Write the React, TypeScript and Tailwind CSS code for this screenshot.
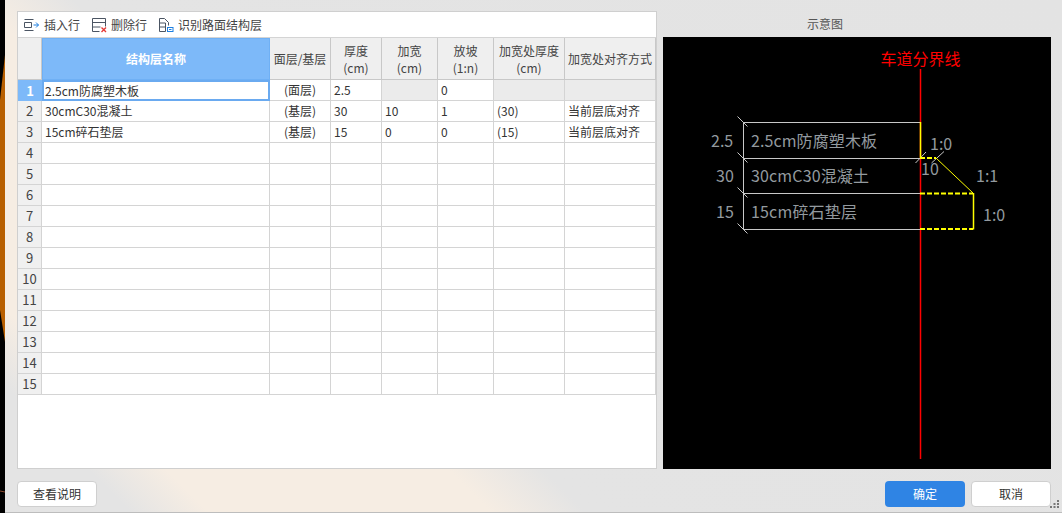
const font = { fontFamily: '"Noto Sans CJK SC", "Noto Sans", sans-serif' }

const columns = [
  { title: '结构层名称' },
  { title: '面层/基层' },
  { title: '厚度', unit: '(cm)' },
  { title: '加宽', unit: '(cm)' },
  { title: '放坡', unit: '(1:n)' },
  { title: '加宽处厚度', unit: '(cm)' },
  { title: '加宽处对齐方式' },
]

const rows = [
  ['2.5cm防腐塑木板', '(面层)', '2.5', '', '0', '', ''],
  ['30cmC30混凝土', '(基层)', '30', '10', '1', '(30)', '当前层底对齐'],
  ['15cm碎石垫层', '(基层)', '15', '0', '0', '(15)', '当前层底对齐'],
]

const InsertIcon = () => (
  <svg width="16" height="14" viewBox="0 0 16 14" fill="none" stroke="#4b5563" strokeWidth="1">
    <path d="M1.5 1.5h9M1.5 12.5h9M1.5 4.5h7v5h-7z" />
    <path d="M10.5 7h5M13 4.5L15.5 7L13 9.5" stroke="#1d7fe0" />
  </svg>
)

const DeleteIcon = () => (
  <svg width="16" height="16" viewBox="0 0 16 16" fill="none" stroke="#4b5563" strokeWidth="1">
    <path d="M1.5 14.5v-13h13v8M1.5 5.5h13M1.5 10h8M1.5 14.5h7" />
    <path d="M10.5 10.5l4.500 4.500M15 10.5l-4.500 4.500" stroke="#e53935" strokeWidth="1.4" />
  </svg>
)

const DetectIcon = () => (
  <svg width="16" height="16" viewBox="0 0 16 16" fill="none" stroke="#4b5563" strokeWidth="1">
    <path d="M1.5 14.5v-13h5l4 4v3M1.5 6h6v8.500M1.5 10h6M1.5 14.5h6" />
    <rect x="9.5" y="10.5" width="5.5" height="4" stroke="#1d7fe0" />
    <path d="M11 12.5h2.5" stroke="#1d7fe0" />
  </svg>
)

const Toolbar = () => (
  <div className="flex h-[26px] items-center gap-[11px] border-b border-[#d4d4d4] pl-[5px] text-[12px] text-[#444]">
    <span className="flex items-center gap-[5px]">
      <InsertIcon />
      插入行
    </span>
    <span className="flex items-center gap-[4px]">
      <DeleteIcon />
      删除行
    </span>
    <span className="flex items-center gap-[4px]">
      <DetectIcon />
      识别路面结构层
    </span>
  </div>
)

const StructureGrid = () => (
  <div className="grid w-fit grid-cols-[24px_228px_61px_51px_56px_56px_71px_91px] auto-rows-[21px] text-[12px] text-[#333]">
    {/* header */}
    <div className="row-[span_2] border-r border-b border-[#c8c8c8] bg-[#efefef]" />
    {columns.map((col, i) => (
      <div
        key={col.title}
        className={
          i === 0
            ? 'row-[span_2] flex items-center justify-center border border-[#6fb0f5] bg-[#7db9f9] font-bold text-white'
            : 'row-[span_2] flex flex-col items-center justify-center border-r border-b border-[#c8c8c8] bg-[#efefef] leading-[17px] text-[#444]'
        }
      >
        <span>{col.title}</span>
        {col.unit && <span>{col.unit}</span>}
      </div>
    ))}

    {/* body */}
    {Array.from({ length: 15 }, (_, r) => (
      <Row key={r} index={r} />
    ))}
  </div>
)

const Row = ({ index }: { index: number }) => {
  const data = rows[index] || ['', '', '', '', '', '', '']
  const active = index === 0
  return (
    <>
      <div
        className={
          active
            ? 'flex items-center justify-center bg-[#7db9f9] text-[13px] font-bold text-white'
            : 'flex items-center justify-center border-r border-b border-[#d4d4d4] bg-[#f0f0f0] text-[13px] text-[#444]'
        }
      >
        {index + 1}
      </div>
      {data.map((value, c) => {
        let cls = 'flex items-center border-r border-b border-[#d4d4d4] px-[3px] whitespace-nowrap'
        if (c === 0 && active) cls = 'flex items-center border-2 border-[#6aaaf0] pl-[1px] whitespace-nowrap'
        if (c === 1) cls += ' justify-center'
        if (active && (c === 3 || c >= 5)) cls += ' bg-[#ebebeb]'
        return (
          <div key={c} className={cls}>
            {value}
          </div>
        )
      })}
    </>
  )
}

const Tick = ({ x, y }: { x: number; y: number }) => (
  <line x1={x - 5.5} y1={y - 5.5} x2={x + 4.5} y2={y + 4.5} stroke="#c8c8c8" />
)

const Diagram = () => (
  <svg width="388" height="432" viewBox="663 37 388 432" className="block bg-black" style={font}>
    <line x1="920.5" y1="69" x2="920.5" y2="459" stroke="#ff0000" strokeWidth="1.5" />
    <text x="920.5" y="65" fontSize="16" fill="#ff0000" textAnchor="middle">
      车道分界线
    </text>

    <g stroke="#c8c8c8" fill="none">
      <path d="M743.5 122.5H920M743.5 158.5H920M743.5 193.5H920M743.5 229.5H920M743.5 122.5V229.5" />
      <path d="M915.5 163L926 152M931.5 163L944 151.5" />
    </g>
    <Tick x={743} y={122} />
    <Tick x={743} y={158} />
    <Tick x={743} y={193} />
    <Tick x={743} y={229} />

    <g stroke="#ffff00" fill="none">
      <path d="M920.5 122V158" strokeWidth="1.5" />
      <path d="M936 158L973 193" />
      <path d="M973.5 193V229.5" strokeWidth="1.5" />
      <path d="M920 158H936M920 193.5H973M920 229H973" strokeWidth="2" strokeDasharray="5 2" />
    </g>

    <g fontSize="16" fill="#939a9f">
      <text x="711" y="147">2.5</text>
      <text x="716" y="182">30</text>
      <text x="716" y="218">15</text>
      <text x="751" y="147" textLength="126">2.5cm防腐塑木板</text>
      <text x="751" y="182" textLength="118">30cmC30混凝土</text>
      <text x="751" y="218" textLength="106">15cm碎石垫层</text>
      <text x="930" y="150">1:0</text>
      <text x="921" y="175">10</text>
      <text x="976" y="182">1:1</text>
      <text x="983" y="221">1:0</text>
    </g>
  </svg>
)

const BackdropEdge = () => (
  <svg width="5" height="513" viewBox="0 0 5 513" className="block shrink-0">
    <polygon points="5,55 0,100 0,310 5,342" fill="#b85f00" />
    <line x1="0" y1="491" x2="5" y2="492" stroke="#8a4a30" />
  </svg>
)

const ResizeGrip = () => (
  <svg width="10" height="9" viewBox="0 0 10 9" className="absolute right-[2px] bottom-[3px]" fill="#777">
    <rect x="7" y="0" width="2" height="2" />
    <rect x="3.5" y="3" width="2" height="2" />
    <rect x="7" y="3" width="2" height="2" />
    <rect x="0" y="6" width="2" height="2" />
    <rect x="3.5" y="6" width="2" height="2" />
    <rect x="7" y="6" width="2" height="2" />
  </svg>
)

const Button = ({ label, primary }: { label: string; primary?: boolean }) => (
  <button
    className={
      primary
        ? 'h-[26px] w-[80px] rounded-[4px] bg-[#2f84e4] text-[12px] text-white'
        : 'h-[26px] w-[80px] rounded-[4px] border border-[#cfcfcf] bg-white text-[12px] text-[#333]'
    }
  >
    {label}
  </button>
)

export default function App() {
  return (
    <div className="flex h-[513px] w-[1062px] overflow-hidden bg-black" style={font}>
      {/* window behind the dialog */}
      <BackdropEdge />

      <div className="relative flex h-full w-[1057px] flex-col border-b border-[#bdbdbd] bg-[linear-gradient(45deg,#e4e4e4_0%,#e4e4e4_8%,#f6ede3_13%,#f6ede3_31%,#e4e4e4_37%,#e3e3e3_100%)] pt-[11px] pr-[11px] pb-[5px] pl-[12px]">
        <div className="flex flex-1 gap-[6px]">
          <div className="h-[458px] w-[640px] border border-[#cfcfcf] bg-white">
            <Toolbar />
            <StructureGrid />
          </div>
          <div className="flex w-[388px] flex-col">
            <div className="flex h-[26px] items-center pl-[144px] text-[12px] text-[#555]">示意图</div>
            <Diagram />
          </div>
        </div>
        <div className="flex items-center justify-between">
          <Button label="查看说明" />
          <div className="flex gap-[6px]">
            <Button label="确定" primary />
            <Button label="取消" />
          </div>
        </div>
        <ResizeGrip />
      </div>
    </div>
  )
}
